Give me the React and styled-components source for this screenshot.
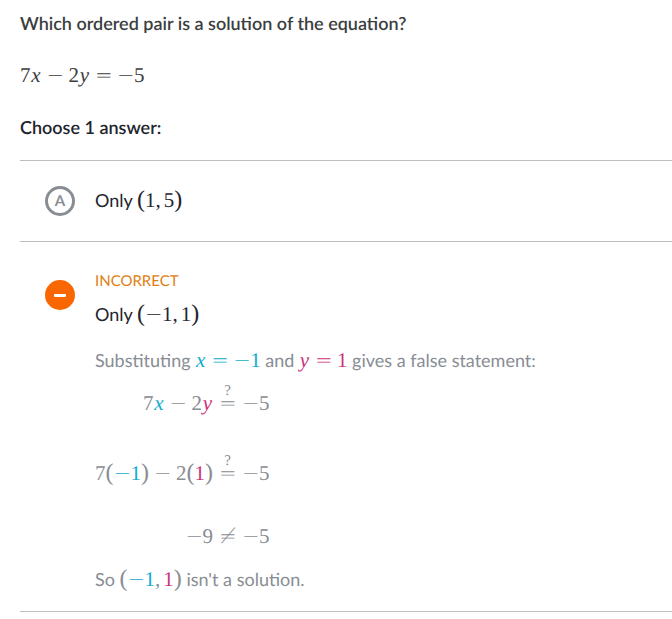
import React from "react";
import styled, { createGlobalStyle } from "styled-components";

const BLUE = "#11accd";
const PINK = "#ca337c";

const GlobalStyle = createGlobalStyle`
  * { box-sizing: border-box; }
  body {
    margin: 0;
    background: #fff;
    color: #21242c;
    font-family: Lato, sans-serif;
    font-size: 18px;
    line-height: 24px;
    text-rendering: geometricPrecision;
  }
`;

const Exercise = styled.main`
  padding: 11px 0 0 20px;
`;

const Question = styled.h1`
  margin: 0;
  font-size: 18px;
  font-weight: 600;
  line-height: 24px;
  color: #3b3e40;
`;

const Equation = styled.p`
  margin: 28px 0;
  line-height: 24px;
  color: #3b3e40;
`;

const Choices = styled.fieldset`
  margin: 0;
  padding: 0;
  border: 0;
  min-width: 0;
`;

const Instruction = styled.legend`
  padding: 0;
  margin-bottom: 21px;
  font-weight: 600;
`;

const Choice = styled.div`
  display: grid;
  grid-template-columns: 30px 1fr;
  column-gap: 20px;
  align-items: start;
  padding: ${(p) => (p.$open ? "27px 0 20px 25px" : "24px 0 25px 25px")};
  border-top: 1px solid #babec2;
  &:last-child { border-bottom: 1px solid #babec2; }
`;

const Marker = styled.span`
  display: grid;
  place-items: center;
  margin-top: ${(p) => (p.$open ? "11px" : "1px")};
  font-size: 15px;
  font-weight: 700;
  line-height: 30px;
  color: #888d93;
  > * { grid-area: 1 / 1; }
`;

const Radio = styled.input`
  appearance: none;
  width: 30px;
  height: 30px;
  margin: 0;
  border: 3px solid #888d93;
  border-radius: 50%;
  &:checked { border-color: #f86700; background: #f86700; }
`;

const Answer = styled.label`
  display: block;
  line-height: 30px;
`;

const Status = styled.div`
  margin-bottom: 6px;
  font-size: 15px;
  line-height: 24px;
  color: #e07d10;
`;

const Rationale = styled.div`
  color: #888d93;
`;

const Sentence = styled.p`
  margin: 19px 0 0;
  line-height: 24px;
`;

const Steps = styled.div`
  display: grid;
  grid-template-columns: max-content max-content;
  grid-template-rows: 43px 70px 63px;
  justify-content: start;
  align-items: end;
`;

const Side = styled.div`
  justify-self: ${(p) => (p.$left ? "end" : "start")};
`;

const MathText = styled.span`
  display: inline-block;
  font-family: "Liberation Serif", serif;
  font-size: 21px;
  line-height: 24px;
  white-space: nowrap;
  color: ${(p) => p.$color || "inherit"};
`;

const Tint = styled.span`
  color: ${(p) => p.$color};
`;

const Variable = styled.i`
  display: inline-block;
  width: 11px;
  text-align: center;
`;

const Operator = styled.span`
  display: inline-block;
  width: 17px;
  margin: 0 ${(p) => (p.$gap || 0)}px;
  font-family: "DejaVu Sans", sans-serif;
  font-size: 21px;
  font-weight: 200;
  line-height: 16px;
  text-align: center;
`;

const Paren = styled.span`
  font-size: 24px;
  line-height: 20px;
`;

const Comma = styled.span`
  margin-right: 3px;
`;

const Questioned = styled.span`
  display: inline-block;
  margin: 0 6px;
  line-height: 12px;
  text-align: center;
`;

const Mark = styled.span`
  display: block;
  font-size: 15px;
  line-height: 8px;
`;

const Minus = ({ gap }) => <Operator $gap={gap}>−</Operator>;
const Equals = () => <Operator $gap={5}>=</Operator>;

const MaybeEquals = () => (
  <Questioned>
    <Mark>?</Mark>
    <Operator>=</Operator>
  </Questioned>
);

const Pair = ({ children }) => (
  <MathText>
    <Paren>(</Paren>
    {children}
    <Paren>)</Paren>
  </MathText>
);

const NegativeFive = () => (
  <>
    <Minus />5
  </>
);

export default function App() {
  return (
    <>
      <GlobalStyle />
      <Exercise>
        <Question>Which ordered pair is a solution of the equation?</Question>
        <Equation>
          <MathText>
            7<Variable>x</Variable>
            <Minus gap={5} />2<Variable>y</Variable>
            <Equals />
            <NegativeFive />
          </MathText>
        </Equation>
        <Choices>
          <Instruction>Choose 1 answer:</Instruction>
          <Choice>
            <Marker>
              <Radio type="radio" name="answer" id="answer-a" />
              <span>A</span>
            </Marker>
            <Answer htmlFor="answer-a">
              Only <Pair>1<Comma>,</Comma>5</Pair>
            </Answer>
          </Choice>
          <Choice $open>
            <Marker $open>
              <Radio type="radio" name="answer" id="answer-b" defaultChecked />
              <svg width="12" height="3" viewBox="0 0 12 3" aria-hidden="true">
                <rect width="12" height="3" rx="1" fill="#fff" />
              </svg>
            </Marker>
            <div>
              <Status>INCORRECT</Status>
              <Answer htmlFor="answer-b">
                Only <Pair><Minus />1<Comma>,</Comma>1</Pair>
              </Answer>
              <Rationale>
                <Sentence>
                  Substituting{" "}
                  <MathText $color={BLUE}>
                    <Variable>x</Variable>
                    <Equals />
                    <Minus />1
                  </MathText>{" "}
                  and{" "}
                  <MathText $color={PINK}>
                    <Variable>y</Variable>
                    <Equals />1
                  </MathText>{" "}
                  gives a false statement:
                </Sentence>
                <Steps>
                  <Side $left>
                    <MathText>
                      7<Tint $color={BLUE}><Variable>x</Variable></Tint>
                      <Minus gap={5} />2<Tint $color={PINK}><Variable>y</Variable></Tint>
                    </MathText>
                  </Side>
                  <Side>
                    <MathText><MaybeEquals /><NegativeFive /></MathText>
                  </Side>
                  <Side $left>
                    <MathText>
                      7<Paren>(</Paren>
                      <Tint $color={BLUE}><Minus />1</Tint>
                      <Paren>)</Paren>
                      <Minus gap={5} />2<Paren>(</Paren>
                      <Tint $color={PINK}>1</Tint>
                      <Paren>)</Paren>
                    </MathText>
                  </Side>
                  <Side>
                    <MathText><MaybeEquals /><NegativeFive /></MathText>
                  </Side>
                  <Side $left>
                    <MathText><Minus />9</MathText>
                  </Side>
                  <Side>
                    <MathText><Operator $gap={6}>≠</Operator><NegativeFive /></MathText>
                  </Side>
                </Steps>
                <Sentence>
                  So{" "}
                  <Pair>
                    <Tint $color={BLUE}><Minus />1</Tint>
                    <Comma>,</Comma>
                    <Tint $color={PINK}>1</Tint>
                  </Pair>{" "}
                  isn't a solution.
                </Sentence>
              </Rationale>
            </div>
          </Choice>
        </Choices>
      </Exercise>
    </>
  );
}
